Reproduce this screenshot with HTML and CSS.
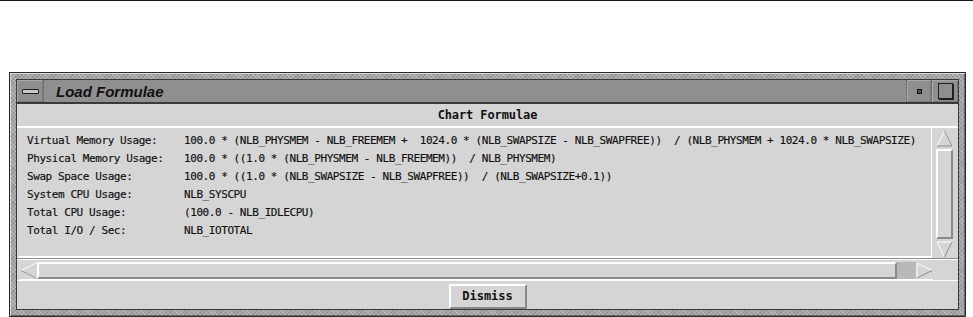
FILE: index.html
```html
<!DOCTYPE html>
<html>
<head>
<meta charset="utf-8">
<link rel="stylesheet" href="styles.css">
</head>
<body>
<div class="topline"></div>
<div class="window">
  <div class="inner">
    <div class="titlebar">
      <div class="tb-btn tb-menu"><span class="menu-bar"></span></div>
      <div class="tb-title">Load Formulae</div>
      <div class="tb-btn tb-min"><span class="min-dot"></span></div>
      <div class="tb-btn tb-max"><span class="max-box"></span></div>
    </div>
    <div class="header">Chart Formulae</div>
    <div class="listrow">
      <div class="textarea">
        <div class="row"><span class="lbl">Virtual Memory Usage:</span><span class="val">100.0 * (NLB_PHYSMEM - NLB_FREEMEM +  1024.0 * (NLB_SWAPSIZE - NLB_SWAPFREE))  / (NLB_PHYSMEM + 1024.0 * NLB_SWAPSIZE)</span></div>
        <div class="row"><span class="lbl">Physical Memory Usage:</span><span class="val">100.0 * ((1.0 * (NLB_PHYSMEM - NLB_FREEMEM))  / NLB_PHYSMEM)</span></div>
        <div class="row"><span class="lbl">Swap Space Usage:</span><span class="val">100.0 * ((1.0 * (NLB_SWAPSIZE - NLB_SWAPFREE))  / (NLB_SWAPSIZE+0.1))</span></div>
        <div class="row"><span class="lbl">System CPU Usage:</span><span class="val">NLB_SYSCPU</span></div>
        <div class="row"><span class="lbl">Total CPU Usage:</span><span class="val">(100.0 - NLB_IDLECPU)</span></div>
        <div class="row"><span class="lbl">Total I/O / Sec:</span><span class="val">NLB_IOTOTAL</span></div>
      </div>
      <div class="vscroll">
        <div class="arrow"><svg width="17" height="17" viewBox="0 0 17 17"><polyline points="1,16 8.5,1 16,16" fill="none" stroke="#ffffff" stroke-width="1"/><polyline points="8.5,1 16,16 1,16" fill="none" stroke="#8a8a8a" stroke-width="1"/></svg></div>
        <div class="vslider"></div>
        <div class="arrow"><svg width="17" height="17" viewBox="0 0 17 17"><polyline points="16,1 1,1 8.5,16" fill="none" stroke="#ffffff" stroke-width="1"/><polyline points="8.5,16 16,1" fill="none" stroke="#8a8a8a" stroke-width="1"/></svg></div>
      </div>
    </div>
    <div class="hscrollrow">
      <div class="hscroll">
        <div class="arrow"><svg width="17" height="17" viewBox="0 0 17 17"><polyline points="16,16 1,8.5 16,1" fill="none" stroke="#ffffff" stroke-width="1"/><polyline points="1,8.5 16,16" fill="none" stroke="#8a8a8a" stroke-width="1"/></svg></div>
        <div class="hslider"></div>
        <div class="htrough"></div>
        <div class="arrow"><svg width="17" height="17" viewBox="0 0 17 17"><polyline points="1,16 1,1 16,8.5" fill="none" stroke="#ffffff" stroke-width="1"/><polyline points="16,8.5 1,16" fill="none" stroke="#8a8a8a" stroke-width="1"/></svg></div>
      </div>
    </div>
    <div class="buttons">
      <button class="btn">Dismiss</button>
    </div>
  </div>
</div>
</body>
</html>
```
FILE: styles.css
```css
html, body {
  margin: 0;
  padding: 0;
  background: #ffffff;
  width: 973px;
  height: 317px;
  overflow: hidden;
}

.topline {
  height: 1px;
  background: #1a1a1a;
}

.window {
  margin: 71px 0 0 9px;
  width: 957px;
  height: 245px;
  box-sizing: border-box;
  border: 1px solid #2a2a2a;
  padding: 6px;
  background-color: #a4a4a4;
  background-image:
    repeating-linear-gradient(45deg, rgba(255,255,255,0.22) 0 1px, transparent 1px 3px),
    repeating-linear-gradient(-45deg, rgba(0,0,0,0.12) 0 1px, transparent 1px 3px);
  box-shadow: inset 1px 1px 0 #d8d8d8, inset -1px -1px 0 #6a6a6a;
}

.inner {
  height: 100%;
  box-sizing: border-box;
  border: 1px solid #3a3a3a;
  background: #d5d5d5;
  display: flex;
  flex-direction: column;
}

.titlebar {
  height: 22px;
  flex: none;
  display: flex;
  background: #8f8f8f;
  border-bottom: 2px solid #3a3a3a;
}

.tb-btn {
  flex: none;
  display: flex;
  align-items: center;
  justify-content: center;
  box-shadow: inset 1px 1px 0 #a8a8a8, inset -1px -1px 0 #7a7a7a;
}

.tb-menu {
  width: 26px;
  border-right: 1px dotted #5a5a5a;
}

.menu-bar {
  display: block;
  width: 15px;
  height: 3px;
  border: 1px solid #1e1e1e;
  background: #c8c8c8;
  border-radius: 1px;
}

.tb-title {
  flex: 1;
  padding-left: 12px;
  display: flex;
  align-items: center;
  font-family: "Liberation Sans", Arial, sans-serif;
  font-weight: bold;
  font-style: italic;
  font-size: 15px;
  color: #111111;
}

.tb-min {
  width: 24px;
  border-left: 1px dotted #5a5a5a;
  border-right: 1px dotted #5a5a5a;
}

.min-dot {
  display: block;
  width: 3px;
  height: 3px;
  border: 1px solid #111;
  background: #555;
}

.tb-max {
  width: 26px;
}

.max-box {
  display: block;
  width: 13px;
  height: 14px;
  border: 1px solid #1e1e1e;
  box-shadow: 1px 1px 0 #1e1e1e;
  background: #8f8f8f;
}

.header {
  height: 22px;
  flex: none;
  display: flex;
  align-items: center;
  justify-content: center;
  font-family: "DejaVu Sans Mono", "Liberation Mono", monospace;
  font-weight: bold;
  font-size: 12px;
  letter-spacing: -0.1px;
  color: #111111;
  border-bottom: 2px solid #ffffff;
}

.listrow {
  flex: none;
  height: 130px;
  display: flex;
  padding: 0 2px 0 1px;
  border-bottom: 1px solid #8a8a8a;
}

.textarea {
  flex: 1;
  box-sizing: border-box;
  padding: 3px 0 0 9px;
  border-right: 1px solid #ffffff;
  border-bottom: 2px solid #ffffff;
  font-family: "DejaVu Sans Mono", "Liberation Mono", monospace;
  font-size: 11px;
  letter-spacing: -0.42px;
  color: #101010;
  -webkit-text-stroke: 0.15px #101010;
}

.row {
  display: flex;
  height: 18px;
  align-items: center;
  white-space: pre;
}

.lbl {
  width: 157px;
  flex: none;
}

.vscroll {
  flex: none;
  width: 19px;
  margin: 2px 1px 0 4px;
  display: flex;
  flex-direction: column;
}

.arrow {
  flex: none;
  width: 17px;
  height: 17px;
  display: flex;
}

.vslider {
  flex: 1;
  margin: 2px 0;
  box-sizing: border-box;
  border-top: 2px solid #ffffff;
  border-left: 2px solid #ffffff;
  border-right: 2px solid #8a8a8a;
  border-bottom: 2px solid #8a8a8a;
  width: 17px;
}

.hscrollrow {
  flex: none;
  height: 22px;
  padding: 2px 0 0 3px;
  box-sizing: border-box;
  border-top: 1px solid #ffffff;
  border-bottom: 1px solid #ffffff;
}

.hscroll {
  width: 913px;
  height: 18px;
  display: flex;
  box-sizing: border-box;
  border-bottom: 1px solid #ffffff;
}

.hslider {
  width: 860px;
  flex: none;
  box-sizing: border-box;
  border-top: 2px solid #ffffff;
  border-left: 2px solid #ffffff;
  border-bottom: 2px solid #8a8a8a;
  border-right: 2px solid #8a8a8a;
}

.htrough {
  flex: 1;
  background: #b8b8b8;
}

.buttons {
  flex: 1;
  display: flex;
  align-items: center;
  justify-content: center;
}

.btn {
  width: 78px;
  height: 25px;
  margin-top: 2px;
  box-sizing: border-box;
  background: #d5d5d5;
  border-top: 2px solid #ffffff;
  border-left: 2px solid #ffffff;
  border-right: 2px solid #8a8a8a;
  border-bottom: 2px solid #8a8a8a;
  font-family: "DejaVu Sans Mono", "Liberation Mono", monospace;
  font-weight: bold;
  font-size: 12px;
  color: #111111;
  padding: 0;
}
```
